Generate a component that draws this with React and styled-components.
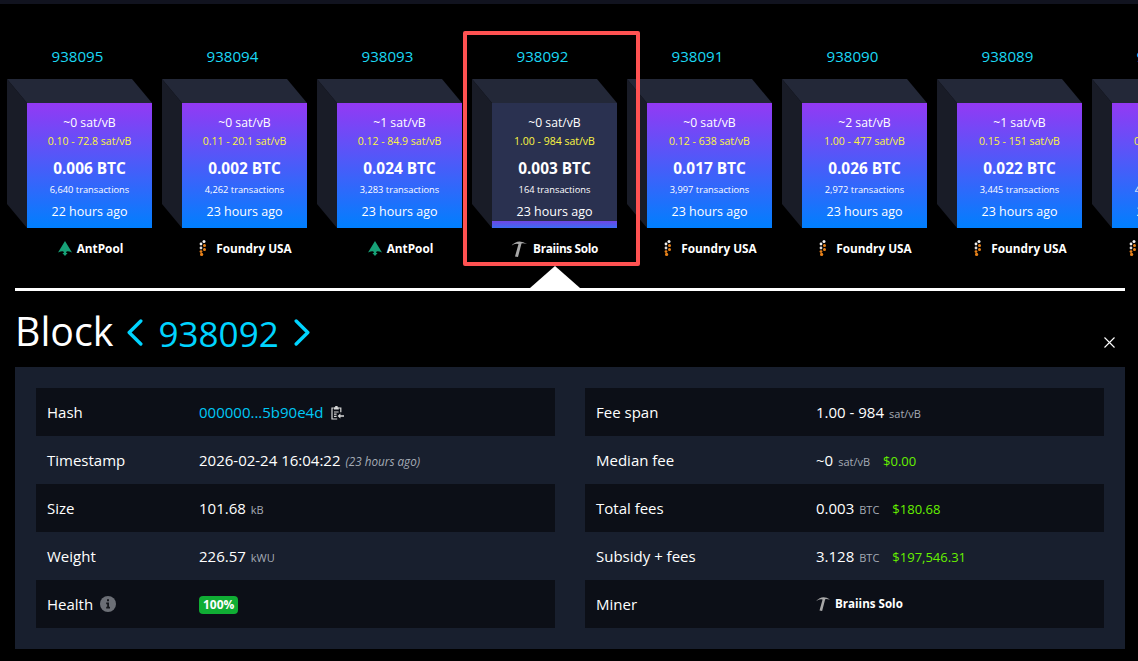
import React from 'react';
import styled, { createGlobalStyle } from 'styled-components';

const Global = createGlobalStyle`
  html, body { margin: 0; padding: 0; background: #000; }
  body { font-family: "Open Sans", "Noto Sans", sans-serif; color: #fff; overflow: hidden; }
`;
const Page = styled.div`width: 1138px; height: 661px; overflow: hidden; background: #000;`;
const TopBar = styled.div`height: 4px; background: #11131f;`;
const Strip = styled.div`
  position: relative; display: flex; gap: 30px; height: 284px; box-sizing: border-box;
  padding: 43px 0 0 27px; overflow: hidden;
`;
const BlockCol = styled.div`flex: 0 0 125px; width: 125px;`;
const HeightLabel = styled.div`
  width: 125px; margin-left: -12px; text-align: center; font-size: 15.1px; line-height: 18px;
  color: #1bd8f4; margin-bottom: 38px;
`;
const Cube = styled.div`
  position: relative; width: 125px; height: 125px; box-sizing: border-box; padding-top: 11px;
  text-align: center;
  background: ${p => p.$selected ? '#2a3150' : 'linear-gradient(#9339f4, #007ffe)'};
  &::before {
    content: ''; position: absolute; left: -20px; top: -24px; width: 20px; height: 149px;
    background: #191c27; clip-path: polygon(0 0, 100% 24px, 100% 100%, 0 125px);
  }
  &::after {
    content: ''; position: absolute; left: -20px; top: -24px; width: 145px; height: 24px;
    background: #232838; clip-path: polygon(0 0, 125px 0, 100% 100%, 20px 100%);
  }
`;
const Fill = styled.div`
  position: absolute; left: 0; right: 0; bottom: 0; height: 7px;
  background: linear-gradient(#6f45e6, #3a6cf2);
`;
const Fee = styled.div`font-size: 12.2px; line-height: 18px;`;
const Range = styled.div`font-size: 10.5px; line-height: 18px; color: #fbf542;`;
const Btc = styled.div`font-size: 15.4px; font-weight: 700; line-height: 20px; margin-top: 9px;`;
const Tx = styled.div`font-size: 9.3px; line-height: 16px; margin-top: 3px;`;
const Ago = styled.div`font-size: 12.5px; line-height: 18px; margin-top: 5px;`;
const Miner = styled.div`
  display: flex; align-items: center; justify-content: center; gap: ${p => p.$gap}px;
  height: 20px; margin-top: 10px; margin-left: ${p => p.$shift}px;
  font-size: 11.8px; font-weight: 700; white-space: nowrap;
  letter-spacing: ${p => p.$track}px;
`;
const Selection = styled.div`
  position: absolute; left: 463px; top: 27px; width: 177px; height: 235px; box-sizing: border-box;
  border: 4px solid #ff5252; border-radius: 2px; pointer-events: none;
`;
const Pointer = styled.div`
  position: absolute; left: 530px; top: 262px; width: 50px; height: 22px; background: #fff;
  clip-path: polygon(50% 0, 100% 100%, 0 100%);
`;
const Divider = styled.div`height: 3px; margin: 0 13px 0 15px; background: #fff;`;
const TitleRow = styled.div`
  display: flex; align-items: center; height: 76px; padding: 7px 15px 0 15px; box-sizing: border-box;
`;
const Title = styled.h1`margin: 0; font-size: 39.3px; font-weight: 400; line-height: 44px; position: relative; top: -2px;`;
const Nav = styled.div`display: flex; align-items: center; color: #00d4ff; margin-left: 14px; gap: 15px;`;
const Height = styled.span`font-size: 35.1px; line-height: 44px;`;
const Close = styled.div`margin-left: auto; margin-right: 8px; margin-top: 19px; display: flex;`;
const Panel = styled.div`
  display: grid; grid-template-columns: 519px 519px; gap: 30px; margin: 0 13px 0 15px; padding: 21px;
  background: #181f2e;
`;
const Rows = styled.div`display: flex; flex-direction: column;`;
const Row = styled.div`
  display: flex; align-items: center; height: 48px; box-sizing: border-box; padding: 0 0 1px 11px;
  font-size: 15px;
  &:nth-child(odd) { background: #0c0f17; }
`;
const Label = styled.div`
  flex: 0 0 ${p => p.$w}px; display: flex; align-items: center; gap: 7px;
`;
const Value = styled.div`display: flex; align-items: baseline; white-space: nowrap;`;
const Link = styled.span`color: #00c8f5;`;
const Unit = styled.span`font-size: 11px; color: #a5abb5; margin-left: 5px;`;
const Rel = styled.i`font-size: 11.7px; color: #a5abb5; margin-left: 5px;`;
const Fiat = styled.span`color: #66f000; font-size: 13px; margin-left: 13px;`;
const Badge = styled.span`
  display: inline-block; background: #10ad34; border-radius: 4px; padding: 0 4px;
  font-size: 12px; font-weight: 700; line-height: 18px; position: relative; top: 1px;
`;
const MinerValue = styled.div`display: flex; align-items: center; gap: 5px; font-size: 11.6px; font-weight: 700;`;

const AntIcon = () => (
  <svg width="14" height="15" viewBox="0 0 14 15" aria-hidden="true">
    <path d="M7 0 L14 11.5 Q9 9.5 8.2 11 L8.2 12 L9.6 12 L7 15 L4.4 12 L5.8 12 L5.8 11 Q5 9.5 0 11.5 Z" fill="#17a177" />
  </svg>
);
const FoundryIcon = () => (
  <svg width="8" height="16" viewBox="0 0 8 16" aria-hidden="true">
    <circle cx="5" cy="1.5" r="1.5" fill="#f0f0f0" />
    <circle cx="2" cy="4" r="1.4" fill="#f0f0f0" />
    <circle cx="5.5" cy="5.6" r="1.5" fill="#e8821a" />
    <circle cx="2" cy="8" r="1.4" fill="#d9d9d9" />
    <circle cx="5.5" cy="9.6" r="1.5" fill="#e8821a" />
    <circle cx="2" cy="11.6" r="1.4" fill="#e8821a" />
    <circle cx="2.6" cy="14.4" r="1.6" fill="#e8821a" />
  </svg>
);
const PickIcon = ({ size = 14 }) => (
  <svg width={size} height={size + 1} viewBox="0 0 16 17" aria-hidden="true">
    <path d="M0 6 Q7 -2 16 4 Q12 3 10.5 3.5 L7 17 L4 16.5 L7.5 4 Q4 3 0 6 Z" fill="#a8a8a8" />
  </svg>
);
const minerKinds = {
  ant: { gap: 5, track: 0, shift: 2, Icon: AntIcon },
  foundry: { gap: 9, track: 0, shift: 2, Icon: FoundryIcon },
  pick: { gap: 6, track: -0.35, shift: 0, Icon: () => <PickIcon size={16} /> },
};

const Chevron = ({ dir }) => (
  <svg width="16" height="27" viewBox="0 0 16 27" aria-hidden="true">
    <path d={dir === 'left' ? 'M13.8 2 L2.2 13.5 L13.8 25' : 'M2.2 2 L13.8 13.5 L2.2 25'} fill="none" stroke="#00d4ff" strokeWidth="3.4" strokeLinecap="round" strokeLinejoin="round" />
  </svg>
);
const CloseIcon = () => (
  <svg width="11" height="11" viewBox="0 0 11 11" aria-hidden="true">
    <path d="M0.5 0.5 L10.5 10.5 M10.5 0.5 L0.5 10.5" stroke="#fff" strokeWidth="1.1" />
  </svg>
);
const ClipSvg = styled.svg`margin-left: 8px; align-self: center; margin-top: 2px;`;
const ClipIcon = () => (
  <ClipSvg width="13" height="14" viewBox="0 0 13 14" aria-hidden="true">
    <path d="M2.8 2 H1 V13 H6.2 M7.8 2 H9.8 V6.2" fill="none" stroke="#d8d8d8" strokeWidth="1.2" />
    <path d="M3 1.2 H4.2 V0 H6.6 V1.2 H7.8 V3.6 H3 Z" fill="#d8d8d8" />
    <path d="M3 5.4 H7.6 V6.5 H3 Z M3 7.6 H5.6 V8.7 H3 Z M3 9.8 H5.6 V10.9 H3 Z" fill="#d8d8d8" />
    <path d="M6.6 10 L9.4 7.5 V9.2 H13 V10.8 H9.4 V12.5 Z" fill="#d8d8d8" />
  </ClipSvg>
);
const InfoIcon = () => (
  <svg width="16" height="16" viewBox="0 0 16 16" aria-hidden="true">
    <circle cx="8" cy="8" r="8" fill="#6c6f76" />
    <path d="M7 3.2 H9 V5.2 H7 Z M6.2 6.6 H9 V10.8 H10 V12.4 H6.2 V10.8 H7.2 V8.2 H6.2 Z" fill="#15171c" />
  </svg>
);

const blocks = [
  ['938095', '~0 sat/vB', '0.10 - 72.8 sat/vB', '0.006 BTC', '6,640 transactions', '22 hours ago', 'AntPool', 'ant'],
  ['938094', '~0 sat/vB', '0.11 - 20.1 sat/vB', '0.002 BTC', '4,262 transactions', '23 hours ago', 'Foundry USA', 'foundry'],
  ['938093', '~1 sat/vB', '0.12 - 84.9 sat/vB', '0.024 BTC', '3,283 transactions', '23 hours ago', 'AntPool', 'ant'],
  ['938092', '~0 sat/vB', '1.00 - 984 sat/vB', '0.003 BTC', '164 transactions', '23 hours ago', 'Braiins Solo', 'pick'],
  ['938091', '~0 sat/vB', '0.12 - 638 sat/vB', '0.017 BTC', '3,997 transactions', '23 hours ago', 'Foundry USA', 'foundry'],
  ['938090', '~2 sat/vB', '1.00 - 477 sat/vB', '0.026 BTC', '2,972 transactions', '23 hours ago', 'Foundry USA', 'foundry'],
  ['938089', '~1 sat/vB', '0.15 - 151 sat/vB', '0.022 BTC', '3,445 transactions', '23 hours ago', 'Foundry USA', 'foundry'],
  ['938088', '~1 sat/vB', '0.15 - 151 sat/vB', '0.022 BTC', '4,102 transactions', '23 hours ago', 'Foundry USA', 'foundry'],
];

export default function App() {
  return (
    <Page>
      <Global />
      <TopBar />
      <Strip>
        {blocks.map(([h, fee, range, btc, tx, ago, miner, kind]) => {
          const selected = h === '938092';
          const { gap, track, shift, Icon } = minerKinds[kind];
          return (
            <BlockCol key={h}>
              <HeightLabel>{h}</HeightLabel>
              <Cube $selected={selected}>
                <Fee>{fee}</Fee>
                <Range>{range}</Range>
                <Btc>{btc}</Btc>
                <Tx>{tx}</Tx>
                <Ago>{ago}</Ago>
                {selected && <Fill />}
              </Cube>
              <Miner $gap={gap} $track={track} $shift={shift}><Icon />{miner}</Miner>
            </BlockCol>
          );
        })}
        <Selection />
        <Pointer />
      </Strip>
      <Divider />
      <TitleRow>
        <Title>Block</Title>
        <Nav>
          <Chevron dir="left" />
          <Height>938092</Height>
          <Chevron dir="right" />
        </Nav>
        <Close><CloseIcon /></Close>
      </TitleRow>
      <Panel>
        <Rows>
          <Row><Label $w={152}>Hash</Label><Value><Link>000000...5b90e4d</Link><ClipIcon /></Value></Row>
          <Row><Label $w={152}>Timestamp</Label><Value>2026-02-24 16:04:22<Rel>(23 hours ago)</Rel></Value></Row>
          <Row><Label $w={152}>Size</Label><Value>101.68<Unit>kB</Unit></Value></Row>
          <Row><Label $w={152}>Weight</Label><Value>226.57<Unit>kWU</Unit></Value></Row>
          <Row><Label $w={152}>Health <InfoIcon /></Label><Value><Badge>100%</Badge></Value></Row>
        </Rows>
        <Rows>
          <Row><Label $w={220}>Fee span</Label><Value>1.00 - 984<Unit>sat/vB</Unit></Value></Row>
          <Row><Label $w={220}>Median fee</Label><Value>~0<Unit>sat/vB</Unit><Fiat>$0.00</Fiat></Value></Row>
          <Row><Label $w={220}>Total fees</Label><Value>0.003<Unit>BTC</Unit><Fiat>$180.68</Fiat></Value></Row>
          <Row><Label $w={220}>Subsidy + fees</Label><Value>3.128<Unit>BTC</Unit><Fiat>$197,546.31</Fiat></Value></Row>
          <Row><Label $w={220}>Miner</Label><MinerValue><PickIcon />Braiins Solo</MinerValue></Row>
        </Rows>
      </Panel>
    </Page>
  );
}
